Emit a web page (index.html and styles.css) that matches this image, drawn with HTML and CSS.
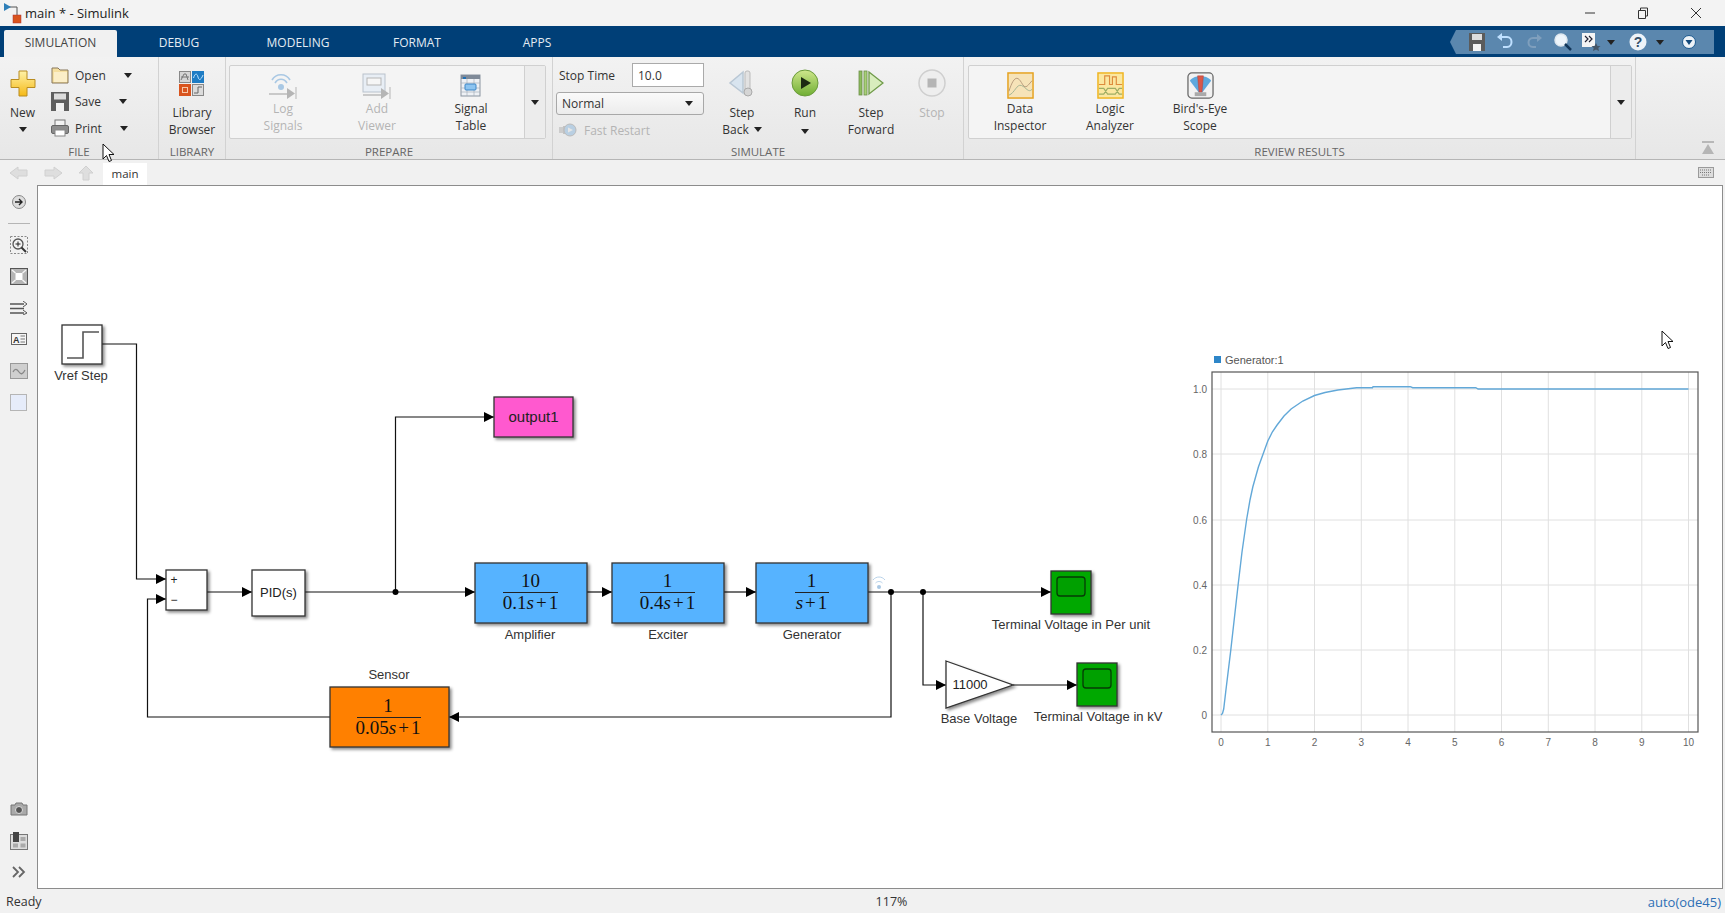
FILE: index.html
```html
<!DOCTYPE html>
<html lang="en">
<head>
    <meta charset="UTF-8">
    <meta name="viewport" content="width=device-width, initial-scale=1.0">
    <title>main * - Simulink</title>
    <link rel="stylesheet" href="styles.css">
</head>
<body>
    <header class="titlebar">
        <svg class="app-icon" width="20" height="24" viewBox="0 0 20 24">
            <path d="M7 6H15V15" fill="none" stroke="#555" stroke-width="1"/>
            <path d="M2 2L9 6L2 10Z" fill="#2f7fb8"/>
            <rect x="11" y="14" width="8" height="8" fill="#d9541e" stroke="#a33" stroke-width=".5"/>
        </svg>
        <span class="app-title">main * - Simulink</span>
        <div class="window-buttons">
            <svg width="12" height="12" viewBox="0 0 12 12"><path d="M1 6H11" stroke="#333" stroke-width="1"/></svg>
            <svg width="12" height="12" viewBox="0 0 12 12"><path d="M1.500 3.500H8.500V11.500H1.500ZM3.500 3.500V1H10.500V9H8.500" fill="none" stroke="#333" stroke-width="1"/></svg>
            <svg width="12" height="12" viewBox="0 0 12 12"><path d="M1 1L11 11M11 1L1 11" stroke="#333" stroke-width="1"/></svg>
        </div>
    </header>

    <nav class="tabbar">
        <a class="tab tab-simulation active">SIMULATION</a>
        <a class="tab tab-debug">DEBUG</a>
        <a class="tab tab-modeling">MODELING</a>
        <a class="tab tab-format">FORMAT</a>
        <a class="tab tab-apps">APPS</a>
        <div class="quick-access">
            <svg class="qa-save" width="18" height="20" viewBox="0 0 18 20">
                <path d="M1 1H17V19H1Z" fill="#5b5b5b"/>
                <rect x="4" y="2" width="10" height="6" fill="#ddd"/>
                <rect x="5" y="12" width="8" height="7" fill="#f4f4f4"/>
            </svg>
            <svg class="qa-undo" width="18" height="18" viewBox="0 0 18 18">
                <path d="M3 4H11C17 4 17 14 11 14H7" fill="none" stroke="#bfe0ff" stroke-width="2"/>
                <path d="M1 4L6 0V8Z" fill="#bfe0ff"/>
            </svg>
            <svg class="qa-redo" width="18" height="18" viewBox="0 0 18 18">
                <path d="M15 5H8C2 5 2 14 8 14H11" fill="none" stroke="#7f9fbd" stroke-width="2"/>
                <path d="M17 5L12 1V9Z" fill="#7f9fbd"/>
            </svg>
            <svg class="qa-search" width="20" height="20" viewBox="0 0 20 20">
                <circle cx="8" cy="8" r="6" fill="#eef5fb" stroke="#dfe8ef" stroke-width="1.500"/>
                <path d="M12 12L18 18" stroke="#12365a" stroke-width="2.500"/>
            </svg>
            <svg class="qa-shortcut" width="20" height="20" viewBox="0 0 20 20">
                <rect x="1" y="1" width="13" height="14" fill="#f5f5f5"/>
                <path d="M4 4L7 7L4 10M8 4L11 7L8 10" fill="none" stroke="#223" stroke-width="1.200"/>
                <path d="M15 11L16.500 14H19.500L17.300 16L18 19L15 17.500L12 19L12.700 16L10.500 14H13.500Z" fill="#456"/>
            </svg>
            <span class="caret qa-caret-a"></span>
            <svg class="qa-help" width="20" height="20" viewBox="0 0 20 20">
                <circle cx="10" cy="10" r="8.500" fill="#eef3f8"/>
                <text x="10" y="15" class="qa-help-mark">?</text>
            </svg>
            <span class="caret qa-caret-b"></span>
            <svg class="qa-min" width="16" height="16" viewBox="0 0 16 16">
                <circle cx="8" cy="8" r="6.500" fill="#eef3f8" stroke="#1d5a8f"/>
                <path d="M4.500 6H11.500L8 11Z" fill="#14497a"/>
            </svg>
        </div>
    </nav>

    <div class="ribbon">
        <section class="rb-section rb-file">
            <div class="rb-body">
                <div class="new-tool">
                    <svg width="26" height="27" viewBox="0 0 26 27">
                        <defs>
                            <linearGradient id="plusFill" x1="0" y1="0" x2="0" y2="1">
                                <stop offset="0" stop-color="#fff2a8"/>
                                <stop offset="1" stop-color="#f5b916"/>
                            </linearGradient>
                        </defs>
                        <path d="M9 1H17V9.500H25V17.500H17V26H9V17.500H1V9.500H9Z" fill="url(#plusFill)" stroke="#b98c20"/>
                    </svg>
                    <span class="new-label">New</span>
                    <span class="caret new-caret"></span>
                </div>
                <div class="file-rows">
                    <div class="file-row">
                        <svg width="18" height="17" viewBox="0 0 18 17">
                            <path d="M1 1H7L9 3H17V16H1Z" fill="#f5dfa0" stroke="#87765a"/>
                            <path d="M3 5H16V15H3Z" fill="#fbeec8"/>
                        </svg>
                        <span>Open</span><span class="caret"></span>
                    </div>
                    <div class="file-row">
                        <svg width="18" height="19" viewBox="0 0 18 19">
                            <path d="M0 0H18V19H0Z" fill="#5f5f5f"/>
                            <rect x="3" y="1.500" width="12" height="6" fill="#ddd"/>
                            <rect x="5" y="11" width="8" height="8" fill="#f2f2f2"/>
                        </svg>
                        <span>Save</span><span class="caret"></span>
                    </div>
                    <div class="file-row">
                        <svg width="18" height="18" viewBox="0 0 18 18">
                            <rect x="4" y="1" width="10" height="6" fill="#f3f3f3" stroke="#777"/>
                            <rect x="0.500" y="6.500" width="17" height="8" rx="1.500" fill="#8d8d8d" stroke="#666"/>
                            <rect x="4" y="11" width="10" height="6" fill="#fff" stroke="#888"/>
                        </svg>
                        <span>Print</span><span class="caret"></span>
                    </div>
                </div>
            </div>
            <div class="rb-label">FILE</div>
        </section>

        <section class="rb-section rb-library">
            <div class="rb-body rb-center">
                <div class="tool tool-library">
                    <svg width="25" height="25" viewBox="0 0 25 25">
                        <rect x="0.500" y="0.500" width="11" height="11" fill="#d5d5d5" stroke="#888"/>
                        <path d="M2 9L5 3H7L9 9M2 6H10" fill="none" stroke="#777"/>
                        <rect x="13" y="0" width="12" height="12" fill="#1f7cc4"/>
                        <path d="M14.500 7C16 2 18 2 19 6S22 9 24 4" fill="none" stroke="#bfe4ff"/>
                        <rect x="0" y="13" width="12" height="12" fill="#d9541e"/>
                        <rect x="3.500" y="16.500" width="5" height="5" fill="none" stroke="#f7c8a8"/>
                        <rect x="13.500" y="13.500" width="11" height="11" fill="#dcdcdc" stroke="#888"/>
                        <path d="M15 22H19V16H23" fill="none" stroke="#666"/>
                    </svg>
                    <span class="tool-text">Library<br>Browser</span>
                </div>
            </div>
            <div class="rb-label">LIBRARY</div>
        </section>

        <section class="rb-section rb-prepare">
            <div class="rb-body">
                <div class="gallery gallery-prepare">
                    <div class="gallery-items">
                        <div class="tool gallery-tool disabled">
                            <svg width="30" height="26" viewBox="0 0 30 26">
                                <path d="M4 7C8 0 18 0 22 7M7 10C10 5 16 5 19 10" fill="none" stroke="#a9c8e4" stroke-width="1.600"/>
                                <circle cx="13" cy="14" r="3" fill="#a9c8e4"/>
                                <path d="M1 21H22" stroke="#bbb" stroke-width="1.500"/>
                                <path d="M19 15L27 20.500L19 26Z" fill="#b5b5b5"/>
                                <path d="M28 14V26" stroke="#b5b5b5"/>
                            </svg>
                            <span class="tool-text">Log<br>Signals</span>
                        </div>
                        <div class="tool gallery-tool disabled">
                            <svg width="30" height="26" viewBox="0 0 30 26">
                                <rect x="1" y="1" width="22" height="18" fill="#e8eef5" stroke="#b9c2cc"/>
                                <rect x="5" y="5" width="14" height="7" fill="#f6f6f6" stroke="#b5b5b5"/>
                                <path d="M1 22H22" stroke="#bbb" stroke-width="1.500"/>
                                <path d="M19 15L27 20.500L19 26Z" fill="#b5b5b5"/>
                                <path d="M28 14V26" stroke="#b5b5b5"/>
                            </svg>
                            <span class="tool-text">Add<br>Viewer</span>
                        </div>
                        <div class="tool gallery-tool">
                            <svg width="22" height="26" viewBox="0 0 22 26">
                                <rect x="1" y="2" width="19" height="21" fill="#eef1f5" stroke="#8a94a0"/>
                                <rect x="1" y="2" width="19" height="4" fill="#7f8a98"/>
                                <rect x="3" y="4" width="3" height="2" fill="#1f6fb5"/>
                                <path d="M1 10H20M1 15H20M1 19H20M7 6V23M14 6V23" stroke="#a8b0ba" stroke-width=".7"/>
                                <rect x="5" y="11" width="11" height="6" rx="1" fill="#8cc4f0" stroke="#3d86c6"/>
                            </svg>
                            <span class="tool-text">Signal<br>Table</span>
                        </div>
                    </div>
                    <div class="gallery-drop"><span class="caret"></span></div>
                </div>
            </div>
            <div class="rb-label">PREPARE</div>
        </section>

        <section class="rb-section rb-simulate">
            <div class="rb-body">
                <div class="stop-panel">
                    <div class="stop-row">
                        <span class="stop-label">Stop Time</span>
                        <div class="stop-input">10.0</div>
                    </div>
                    <div class="mode-select"><span>Normal</span><span class="caret"></span></div>
                    <div class="fast-restart">
                        <svg width="18" height="14" viewBox="0 0 18 14">
                            <rect x="0" y="4" width="5" height="6" fill="#ccc"/>
                            <rect x="4" y="3" width="5" height="8" fill="#c3c3c3"/>
                            <circle cx="11" cy="7" r="6" fill="#b9cfe2" stroke="#bbb"/>
                            <path d="M9 4.500L14 7L9 9.500Z" fill="#e6e6e6"/>
                        </svg>
                        <span>Fast Restart</span>
                    </div>
                </div>
                <div class="tool sim-tool tool-back">
                    <svg width="28" height="28" viewBox="0 0 28 28">
                        <path d="M15 3V24L2 14Z" fill="#d8e4ef" stroke="#b9c7d4" stroke-width="1.500"/>
                        <rect x="17" y="2" width="5" height="20" rx="2" fill="#e2e2e2" stroke="#bbb"/>
                        <circle cx="20" cy="23" r="4" fill="#d5d5d5" stroke="#aaa"/>
                    </svg>
                    <span class="tool-text">Step<br>Back<span class="caret inline-caret"></span></span>
                </div>
                <div class="tool sim-tool tool-run">
                    <svg width="28" height="28" viewBox="0 0 28 28">
                        <defs>
                            <linearGradient id="runFill" x1="0" y1="0" x2="0" y2="1">
                                <stop offset="0" stop-color="#cfe78c"/>
                                <stop offset="1" stop-color="#6fae33"/>
                            </linearGradient>
                        </defs>
                        <circle cx="14" cy="14" r="13" fill="url(#runFill)" stroke="#6b9b3c"/>
                        <path d="M10 8L20 14L10 20Z" fill="#1c2b12"/>
                    </svg>
                    <span class="tool-text">Run<br><span class="caret"></span></span>
                </div>
                <div class="tool sim-tool tool-forward">
                    <svg width="26" height="28" viewBox="0 0 26 28">
                        <rect x="1" y="2" width="3" height="24" fill="#8dbb5c" stroke="#6d8f4a" stroke-width=".8"/>
                        <rect x="6" y="2" width="3" height="24" fill="#a8d077" stroke="#6d8f4a" stroke-width=".8"/>
                        <path d="M11 3L25 14L11 25Z" fill="#d8edbd" stroke="#6f9a49" stroke-width="1.300"/>
                    </svg>
                    <span class="tool-text">Step<br>Forward</span>
                </div>
                <div class="tool sim-tool tool-stop disabled">
                    <svg width="28" height="28" viewBox="0 0 28 28">
                        <circle cx="14" cy="14" r="13" fill="#eeeeee" stroke="#cfcfcf" stroke-width="1.500"/>
                        <rect x="9.500" y="9.500" width="9" height="9" fill="#b5b5b5"/>
                    </svg>
                    <span class="tool-text">Stop</span>
                </div>
            </div>
            <div class="rb-label">SIMULATE</div>
        </section>

        <section class="rb-section rb-review">
            <div class="rb-body">
                <div class="gallery gallery-review">
                    <div class="gallery-items">
                        <div class="tool review-tool">
                            <svg width="28" height="28" viewBox="0 0 28 28">
                                <rect x="1" y="1" width="26" height="26" fill="#f6e3b8" stroke="#e5a11c" stroke-width="1.500"/>
                                <path d="M2 20C7 4 11 4 15 11S20 16 26 9" fill="none" stroke="#b79a7b"/>
                                <path d="M2 24C8 22 10 12 15 14S22 22 26 18" fill="none" stroke="#a3b392"/>
                            </svg>
                            <span class="tool-text">Data<br>Inspector</span>
                        </div>
                        <div class="tool review-tool">
                            <svg width="28" height="28" viewBox="0 0 28 28">
                                <rect x="1" y="1" width="26" height="26" fill="#fbe7a0" stroke="#efb31f" stroke-width="1.500"/>
                                <path d="M2 13H8V4H13V13H16V5H20V13H26" fill="none" stroke="#dd8b3c" stroke-width="1.200"/>
                                <path d="M2 17H7L11 23H19L23 17H26M2 23H7L11 17H19L23 23H26" fill="none" stroke="#9fad63" stroke-width="1.200"/>
                            </svg>
                            <span class="tool-text">Logic<br>Analyzer</span>
                        </div>
                        <div class="tool review-tool">
                            <svg width="28" height="28" viewBox="0 0 28 28">
                                <rect x="1" y="1" width="26" height="26" rx="4" fill="#f2f2f2" stroke="#666" stroke-width="1.300"/>
                                <path d="M3 9C7 3 21 3 25 9L16 21H12Z" fill="#5ea8dd"/>
                                <path d="M11 4H17L15.500 21H12.500Z" fill="#d9584a" stroke="#b83a30" stroke-width=".5"/>
                                <rect x="8" y="21" width="12" height="4" fill="#aaa"/>
                            </svg>
                            <span class="tool-text">Bird's-Eye<br>Scope</span>
                        </div>
                    </div>
                    <div class="gallery-drop"><span class="caret"></span></div>
                </div>
            </div>
            <div class="rb-label">REVIEW RESULTS</div>
        </section>

        <div class="rb-collapse">
            <svg width="14" height="14" viewBox="0 0 14 14">
                <path d="M1 1H13" stroke="#a7a7a7" stroke-width="1.500"/>
                <path d="M7 3L13 13H1Z" fill="#b5b5b5"/>
            </svg>
        </div>
    </div>

    <div class="crumbs">
        <svg class="crumb-back" width="20" height="14" viewBox="0 0 20 14"><path d="M1 7L9 1V4H18V10H9V13Z" fill="#dedede" stroke="#d0d0d0"/></svg>
        <svg class="crumb-next" width="20" height="14" viewBox="0 0 20 14"><path d="M19 7L11 1V4H2V10H11V13Z" fill="#dedede" stroke="#d0d0d0"/></svg>
        <svg class="crumb-up" width="16" height="16" viewBox="0 0 16 16"><path d="M8 1L15 8H11V15H5V8H1Z" fill="#dedede" stroke="#d0d0d0"/></svg>
        <div class="crumb-tab">main</div>
        <svg class="crumb-keys" width="16" height="11" viewBox="0 0 16 11">
            <rect x="0.500" y="0.500" width="15" height="10" fill="#ddd" stroke="#9a9a9a"/>
            <path d="M2 3H14M2 5.500H14M4 8H12" stroke="#777" stroke-dasharray="1 1"/>
        </svg>
    </div>

    <div class="workspace">
        <aside class="toolstrip">
            <div class="strip-slot strip-slot-first">
                <svg width="16" height="16" viewBox="0 0 16 16">
                    <circle cx="8" cy="8" r="6.500" fill="#ddd" stroke="#888"/>
                    <path d="M4 8H11M8 5L11 8L8 11" fill="none" stroke="#222" stroke-width="1.400"/>
                </svg>
            </div>
            <div class="strip-sep"></div>
            <div class="strip-slot">
                <svg width="18" height="18" viewBox="0 0 18 18">
                    <rect x="0.500" y="0.500" width="17" height="17" fill="none" stroke="#888" stroke-dasharray="2 1.500"/>
                    <circle cx="8" cy="8" r="5" fill="#f3f3f3" stroke="#555" stroke-width="1.300"/>
                    <path d="M5.500 8H10.500M8 5.500V10.500" stroke="#222"/>
                    <path d="M11.500 11.500L16 16" stroke="#333" stroke-width="2"/>
                </svg>
            </div>
            <div class="strip-slot">
                <svg width="18" height="17" viewBox="0 0 18 17">
                    <rect x="0.500" y="0.500" width="17" height="16" fill="#b5b5b5" stroke="#555"/>
                    <rect x="5.500" y="5" width="7" height="7" fill="#fff"/>
                    <path d="M2 2L5.500 5M16 2L12.500 5M2 15L5.500 12M16 15L12.500 12" stroke="#f4f4f4" stroke-width="1.500"/>
                </svg>
            </div>
            <div class="strip-slot">
                <svg width="18" height="14" viewBox="0 0 18 14">
                    <path d="M0 3H14M0 7.500H14M0 12H14" stroke="#555" stroke-width="1.300"/>
                    <path d="M13 0L17 3L13 6M13 9L17 12L13 14" fill="none" stroke="#555"/>
                </svg>
            </div>
            <div class="strip-slot">
                <svg width="16" height="12" viewBox="0 0 16 12">
                    <rect x="0.500" y="0.500" width="15" height="11" fill="#f6f6f6" stroke="#666"/>
                    <text x="2" y="9.500" class="strip-a">A</text>
                    <path d="M9.500 3H14M9.500 6H14M9.500 9H14" stroke="#777"/>
                </svg>
            </div>
            <div class="strip-slot">
                <svg width="18" height="16" viewBox="0 0 18 16">
                    <rect x="0.500" y="0.500" width="17" height="15" fill="#cfcfcf" stroke="#999"/>
                    <path d="M3 9C5 5 7 6 9 9S13 11 15 7" fill="none" stroke="#888" stroke-width="1.300"/>
                </svg>
            </div>
            <div class="strip-slot"><div class="strip-area"></div></div>
            <div class="strip-slot strip-slot-bottom">
                <svg width="18" height="14" viewBox="0 0 18 14">
                    <path d="M1 3H5L6 1H12L13 3H17V13H1Z" fill="#a9a9a9" stroke="#777"/>
                    <circle cx="9" cy="8" r="3.500" fill="#555" stroke="#ddd"/>
                </svg>
            </div>
            <div class="strip-slot">
                <svg width="18" height="18" viewBox="0 0 18 18">
                    <rect x="0.500" y="2.500" width="17" height="15" fill="#ddd" stroke="#777"/>
                    <rect x="3" y="0" width="6" height="10" fill="#444"/>
                    <rect x="10.500" y="5" width="5" height="4" fill="#aaa"/>
                    <rect x="3" y="11.500" width="5" height="4" fill="#aaa"/>
                    <rect x="10.500" y="11.500" width="5" height="4" fill="#aaa"/>
                </svg>
            </div>
            <div class="strip-slot">
                <svg width="14" height="12" viewBox="0 0 14 12">
                    <path d="M1 1L6 6L1 11M7 1L12 6L7 11" fill="none" stroke="#666" stroke-width="1.800"/>
                </svg>
            </div>
        </aside>

        <div class="canvas">
            <!-- viewBox uses window coordinates so the model can be read off the screenshot -->
            <svg class="model" viewBox="38 186 1684 702">
                <defs>
                    <marker id="arrow" markerUnits="userSpaceOnUse" markerWidth="10" markerHeight="10" refX="10" refY="5" orient="auto">
                        <path d="M0 0L10 5L0 10Z" fill="#000"/>
                    </marker>
                </defs>

                <g class="wires">
                    <path d="M102 344H136.500V579H166" marker-end="url(#arrow)"/>
                    <path d="M207 592H252" marker-end="url(#arrow)"/>
                    <path d="M305 592H475" marker-end="url(#arrow)"/>
                    <path d="M395.500 592V417H494" marker-end="url(#arrow)"/>
                    <path d="M587 592H612" marker-end="url(#arrow)"/>
                    <path d="M724 592H756" marker-end="url(#arrow)"/>
                    <path d="M868 592H1051" marker-end="url(#arrow)"/>
                    <path d="M923 592V685H946" marker-end="url(#arrow)"/>
                    <path d="M1013 685H1077" marker-end="url(#arrow)"/>
                    <path d="M891 592V717H449" marker-end="url(#arrow)"/>
                    <path d="M330 717H147.500V599H166" marker-end="url(#arrow)"/>
                </g>
                <circle class="joint" cx="395.500" cy="592" r="3"/>
                <circle class="joint" cx="891" cy="592" r="3"/>
                <circle class="joint" cx="923" cy="592" r="3"/>

                <g class="log-mark">
                    <path d="M873 580C876 576 882 576 885 580M875.500 583C877.500 581 880.500 581 882.500 583"/>
                    <circle cx="879" cy="587" r="2"/>
                </g>

                <rect class="block white" x="62" y="325" width="40" height="39"/>
                <path class="step-icon" d="M67 358H83V332H99"/>
                <text class="label" x="81" y="380">Vref Step</text>

                <rect class="block magenta" x="494" y="397" width="79" height="40"/>
                <text class="block-text output-text" x="533.500" y="421.500">output1</text>

                <rect class="block white" x="166" y="570" width="41" height="40"/>
                <text class="sign" x="174" y="584">+</text>
                <text class="sign" x="174" y="604">−</text>

                <rect class="block white" x="252" y="570" width="53" height="46"/>
                <text class="block-text" x="278.500" y="597">PID(s)</text>

                <rect class="block blue" x="475" y="563" width="112" height="60"/>
                <text class="frac" x="530.500" y="587">10</text>
                <path class="frac-bar" d="M503 592.500H558"/>
                <text class="frac" x="530.500" y="609">0.1<tspan class="frac-s">s</tspan><tspan dx="2">+</tspan><tspan dx="2">1</tspan></text>
                <text class="label" x="530" y="639">Amplifier</text>

                <rect class="block blue" x="612" y="563" width="112" height="60"/>
                <text class="frac" x="667.500" y="587">1</text>
                <path class="frac-bar" d="M640 592.500H695"/>
                <text class="frac" x="667.500" y="609">0.4<tspan class="frac-s">s</tspan><tspan dx="2">+</tspan><tspan dx="2">1</tspan></text>
                <text class="label" x="668" y="639">Exciter</text>

                <rect class="block blue" x="756" y="563" width="112" height="60"/>
                <text class="frac" x="811.500" y="587">1</text>
                <path class="frac-bar" d="M795 592.500H829"/>
                <text class="frac" x="811.500" y="609"><tspan class="frac-s">s</tspan><tspan dx="2">+</tspan><tspan dx="2">1</tspan></text>
                <text class="label" x="812" y="639">Generator</text>

                <rect class="block orange" x="330" y="687" width="119" height="60"/>
                <text class="frac" x="388" y="712">1</text>
                <path class="frac-bar" d="M357 717.500H421"/>
                <text class="frac" x="388" y="734">0.05<tspan class="frac-s">s</tspan><tspan dx="2">+</tspan><tspan dx="2">1</tspan></text>
                <text class="label" x="389" y="679">Sensor</text>

                <rect class="block green" x="1051" y="571" width="40" height="43"/>
                <rect class="scope-screen" x="1057" y="577" width="28" height="19" rx="3"/>
                <text class="label" x="1071" y="629">Terminal Voltage in Per unit</text>

                <path class="block white" d="M946 661L1013 685L946 708Z"/>
                <text class="block-text" x="970" y="689">11000</text>
                <text class="label" x="979" y="723">Base Voltage</text>

                <rect class="block green" x="1077" y="663" width="40" height="43"/>
                <rect class="scope-screen" x="1083" y="669" width="28" height="19" rx="3"/>
                <text class="label" x="1098" y="720.500">Terminal Voltage in kV</text>

                <!-- scope plot -->
                <rect class="legend-key" x="1214" y="356" width="7" height="7"/>
                <text class="legend" x="1225" y="364">Generator:1</text>
                <rect class="plot-bg" x="1212" y="372" width="486" height="360"/>
                <path class="grid" d="M1212 389H1698M1212 454H1698M1212 520H1698M1212 585H1698M1212 650H1698M1212 715H1698"/>
                <path class="grid" d="M1221 372V732M1267.800 372V732M1314.500 372V732M1361.300 372V732M1408 372V732M1454.800 372V732M1501.500 372V732M1548.300 372V732M1595 372V732M1641.800 372V732M1688.500 372V732"/>
                <polyline class="trace" points="1221,715 1222.500,713.500 1223.700,709 1225.700,692 1230.800,650 1238.100,585 1242,552 1246.700,519 1250,500 1252.800,487 1258.400,467 1263.100,454 1267.800,441 1272.300,432 1277.100,425 1284,416 1291.100,409 1302.800,401 1314.500,395.500 1325,392.500 1337.900,390 1356.600,387.700 1372.500,387.700 1373,386.700 1410.300,386.700 1412.700,387.700 1475.800,387.700 1478.100,389 1688.500,389"/>
                <rect class="plot-frame" x="1212" y="372" width="486" height="360"/>
                <g class="ytick">
                    <text x="1207" y="393">1.0</text>
                    <text x="1207" y="458">0.8</text>
                    <text x="1207" y="524">0.6</text>
                    <text x="1207" y="589">0.4</text>
                    <text x="1207" y="654">0.2</text>
                    <text x="1207" y="719">0</text>
                </g>
                <g class="xtick">
                    <text x="1221" y="746">0</text>
                    <text x="1267.800" y="746">1</text>
                    <text x="1314.500" y="746">2</text>
                    <text x="1361.300" y="746">3</text>
                    <text x="1408" y="746">4</text>
                    <text x="1454.800" y="746">5</text>
                    <text x="1501.500" y="746">6</text>
                    <text x="1548.300" y="746">7</text>
                    <text x="1595" y="746">8</text>
                    <text x="1641.800" y="746">9</text>
                    <text x="1688.500" y="746">10</text>
                </g>
            </svg>
        </div>
    </div>

    <footer class="statusbar">
        <span class="status-left">Ready</span>
        <span class="status-zoom">117%</span>
        <span class="status-solver">auto(ode45)</span>
    </footer>

    <svg class="pointer pointer-ribbon" width="14" height="20" viewBox="0 0 14 20">
        <path d="M1 1V16L4.500 12.500L7 18.500L9.500 17.500L7 11.500H12Z" fill="#fff" stroke="#111"/>
    </svg>
    <svg class="pointer pointer-canvas" width="14" height="20" viewBox="0 0 14 20">
        <path d="M1 1V16L4.500 12.500L7 18.500L9.500 17.500L7 11.500H12Z" fill="#fff" stroke="#111"/>
    </svg>
</body>
</html>
```

FILE: styles.css
```css
* {
    box-sizing: border-box;
}

html, body {
    height: 100%;
}

body {
    margin: 0;
    display: flex;
    flex-direction: column;
    overflow: hidden;
    font-family: "Open Sans", "Noto Sans", sans-serif;
    font-size: 12px;
    color: #333;
    background-color: #f1f1f1;
}

svg {
    display: block;
    flex: none;
}

/* title bar */
.titlebar {
    height: 26px;
    display: flex;
    align-items: center;
    padding-left: 2px;
    background-color: #f3f3f3;
}

.app-title {
    margin-left: 3px;
    font-size: 13px;
    color: #222;
}

.window-buttons {
    margin-left: auto;
    display: flex;
    gap: 41px;
    padding-right: 23px;
}

/* tabs */
.tabbar {
    height: 31px;
    display: flex;
    align-items: flex-end;
    padding-left: 4px;
    background-color: #003f77;
    color: #e4ecf3;
}

.tab {
    height: 27px;
    line-height: 26px;
    text-align: center;
}

.tab-simulation { width: 113px; }
.tab-debug { width: 124px; }
.tab-modeling { width: 114px; }
.tab-format { width: 124px; }
.tab-apps { width: 116px; }

.tab.active {
    background-color: #f1f1f1;
    color: #444;
    border-radius: 2px 2px 0 0;
}

.quick-access {
    width: 264px;
    height: 24px;
    margin: 0 11px 3px auto;
    display: flex;
    align-items: center;
    padding-left: 18px;
    background-color: #5b87ae;
    clip-path: polygon(6px 0, 100% 0, 100% 100%, 6px 100%, 0 50%);
}

.qa-undo { margin-left: 10px; }
.qa-redo { margin-left: 11px; }
.qa-search { margin-left: 10px; }
.qa-shortcut { margin-left: 8px; }
.qa-caret-a { margin-left: 6px; }
.qa-help { margin-left: 13px; }
.qa-caret-b { margin-left: 8px; }
.qa-min { margin-left: 17px; }

.qa-help-mark {
    font-family: "Liberation Sans", sans-serif;
    font-size: 14px;
    font-weight: bold;
    fill: #36506b;
    text-anchor: middle;
}

.caret {
    display: inline-block;
    width: 0;
    height: 0;
    border-left: 4px solid transparent;
    border-right: 4px solid transparent;
    border-top: 5px solid #222;
}

/* ribbon */
.ribbon {
    height: 103px;
    display: flex;
    background: linear-gradient(#f2f2f2, #e7e7e7);
    border-bottom: 1px solid #b5b5b5;
}

.rb-section {
    display: flex;
    flex-direction: column;
    border-right: 1px solid #d2d2d2;
}

.rb-file { width: 159px; }
.rb-library { width: 67px; }
.rb-prepare { width: 327px; }
.rb-simulate { width: 411px; }
.rb-review { width: 672px; }

.rb-body {
    flex: 1;
    display: flex;
}

.rb-center {
    justify-content: center;
}

.rb-label {
    height: 16px;
    line-height: 18px;
    text-align: center;
    font-size: 11.500px;
    color: #666;
}

.rb-collapse {
    flex: 1;
    display: flex;
    align-items: flex-end;
    justify-content: flex-end;
    padding: 0 10px 4px 0;
}

.new-tool {
    width: 45px;
    padding-top: 13px;
    display: flex;
    flex-direction: column;
    align-items: center;
}

.new-label {
    margin-top: 7px;
    line-height: 17px;
}

.new-caret {
    margin-top: 6px;
}

.file-rows {
    margin-left: 6px;
    padding-top: 5px;
}

.file-row {
    height: 26.500px;
    display: flex;
    align-items: center;
    gap: 6px;
}

.file-row svg {
    width: 18px;
}

.file-row .caret {
    margin-left: 12px;
}

.tool {
    display: flex;
    flex-direction: column;
    align-items: center;
    text-align: center;
}

.tool-text {
    display: block;
    line-height: 17px;
}

.disabled .tool-text {
    color: #b4b4b4;
}

.tool-library {
    padding-top: 14px;
}

.tool-library .tool-text {
    margin-top: 8px;
}

.gallery {
    height: 74px;
    margin-top: 8px;
    display: flex;
    background-color: #f4f4f4;
    border: 1px solid #d0d0d0;
    border-radius: 2px;
}

.gallery-prepare {
    width: 317px;
    margin-left: 3px;
}

.gallery-review {
    width: 664px;
    margin-left: 4px;
}

.gallery-items {
    flex: 1;
    display: flex;
    padding-top: 7px;
    padding-left: 6px;
}

.gallery-drop {
    width: 21px;
    display: flex;
    align-items: center;
    justify-content: center;
    background-color: #ececec;
    border-left: 1px solid #d0d0d0;
}

.gallery-tool {
    width: 94px;
}

.review-tool {
    width: 90px;
}

.gallery-tool svg {
    height: 26px;
}

.review-tool svg {
    height: 27px;
    width: 27px;
    margin-top: -1px;
}

.gallery-items .tool-text {
    margin-top: 1px;
}

/* simulate */
.stop-panel {
    width: 148px;
    margin-left: 3px;
    padding-top: 6px;
}

.stop-row {
    display: flex;
    justify-content: space-between;
    align-items: center;
    padding-left: 3px;
}

.stop-input {
    width: 72px;
    height: 24px;
    line-height: 24px;
    padding-left: 5px;
    background-color: #fff;
    border: 1px solid #aaa;
}

.mode-select {
    height: 23px;
    margin-top: 5px;
    padding: 0 10px 0 5px;
    display: flex;
    align-items: center;
    justify-content: space-between;
    background: linear-gradient(#fafafa, #ececec);
    border: 1px solid #a8a8a8;
    border-radius: 3px;
}

.fast-restart {
    height: 20px;
    margin-top: 5px;
    padding-left: 3px;
    display: flex;
    align-items: center;
    gap: 7px;
    color: #b4b4b4;
}

.sim-tool {
    padding-top: 12px;
}

.sim-tool .tool-text {
    margin-top: 7px;
}

.tool-back { width: 76px; }
.tool-run { width: 50px; }
.tool-forward { width: 82px; }
.tool-stop { width: 40px; }

.inline-caret {
    margin-left: 5px;
    vertical-align: 2px;
}

/* breadcrumb row */
.crumbs {
    height: 25px;
    display: flex;
    align-items: center;
    padding-left: 9px;
    background-color: #f1f1f1;
}

.crumb-next { margin-left: 14px; }
.crumb-up { margin-left: 15px; }

.crumb-tab {
    width: 44px;
    height: 22px;
    margin-top: 3px;
    margin-left: 9px;
    line-height: 22px;
    text-align: center;
    background-color: #fff;
    font-size: 11.500px;
}

.crumb-keys {
    margin-left: auto;
    margin-right: 11px;
}

/* workspace */
.workspace {
    flex: 1;
    min-height: 0;
    display: flex;
}

.toolstrip {
    width: 37px;
    display: flex;
    flex-direction: column;
    align-items: center;
    padding: 2px 0 1px;
    background-color: #f1f1f1;
}

.strip-slot {
    height: 31.500px;
    flex: none;
    display: flex;
    align-items: center;
    justify-content: center;
}

.strip-slot-first {
    height: 30px;
}

.strip-slot-bottom {
    margin-top: auto;
}

.strip-sep {
    width: 22px;
    height: 1px;
    margin: 6px 0 5px;
    background-color: #b5b5b5;
}

.strip-area {
    width: 17px;
    height: 17px;
    background-color: #e6ecfa;
    border: 1.500px solid #b5b5b5;
}

.strip-a {
    font-family: "Liberation Sans", sans-serif;
    font-size: 9px;
    font-weight: bold;
    fill: #333;
}

.canvas {
    width: 1686px;
    background-color: #fff;
    border: 1px solid #8c8c8c;
}

.model {
    width: 1684px;
    height: 702px;
    font-family: "Liberation Sans", Arial, sans-serif;
}

.wires path {
    fill: none;
    stroke: #111;
    stroke-width: 1.200;
}

.joint {
    fill: #000;
}

.log-mark path {
    fill: none;
    stroke: #b9d3ea;
}

.log-mark circle {
    fill: #a9c8e4;
}

.block {
    stroke: #333;
    stroke-width: 1.300;
    filter: drop-shadow(2px 2px 1.500px rgba(0, 0, 0, 0.45));
}

.white { fill: #fff; }
.blue { fill: #56b3ff; }
.orange { fill: #ff8000; }
.green { fill: #00a800; }
.magenta { fill: #ff59cf; }

.step-icon {
    fill: none;
    stroke: #555;
    stroke-width: 1.600;
}

.label {
    font-size: 13px;
    fill: #333;
    text-anchor: middle;
}

.block-text {
    font-size: 13px;
    fill: #222;
    text-anchor: middle;
}

.output-text {
    font-size: 15px;
}

.sign {
    font-size: 12px;
    fill: #222;
    text-anchor: middle;
}

.frac {
    font-family: "Liberation Serif", "Times New Roman", serif;
    font-size: 19px;
    fill: #111;
    text-anchor: middle;
}

.frac-s {
    font-style: italic;
}

.frac-bar {
    stroke: #222;
    stroke-width: 1;
}

.scope-screen {
    fill: #00a000;
    stroke: #063a06;
    stroke-width: 1.300;
}

.legend-key { fill: #2e86c8; }

.legend {
    font-size: 11px;
    fill: #555;
}

.plot-bg { fill: #fff; }

.grid {
    fill: none;
    stroke: #e0e0e0;
    stroke-width: 1;
}

.trace {
    fill: none;
    stroke: #62a8d8;
    stroke-width: 1.400;
}

.plot-frame {
    fill: none;
    stroke: #555;
    stroke-width: 1.200;
}

.ytick text, .xtick text {
    font-size: 10px;
    fill: #666;
}

.ytick text { text-anchor: end; }
.xtick text { text-anchor: middle; }

/* status bar */
.statusbar {
    height: 24px;
    display: grid;
    grid-template-columns: 1fr auto 1fr;
    align-items: center;
    padding: 1px 4px 0 6px;
    font-size: 12.500px;
    background-color: #f1f1f1;
}

.status-zoom {
    margin-left: 56px;
}

.status-solver {
    text-align: right;
    font-size: 13px;
    color: #2d6fb5;
}

/* mouse pointers left in the capture */
.pointer {
    position: absolute;
}

.pointer-ribbon {
    left: 102px;
    top: 143px;
}

.pointer-canvas {
    left: 1661px;
    top: 330px;
}
```
